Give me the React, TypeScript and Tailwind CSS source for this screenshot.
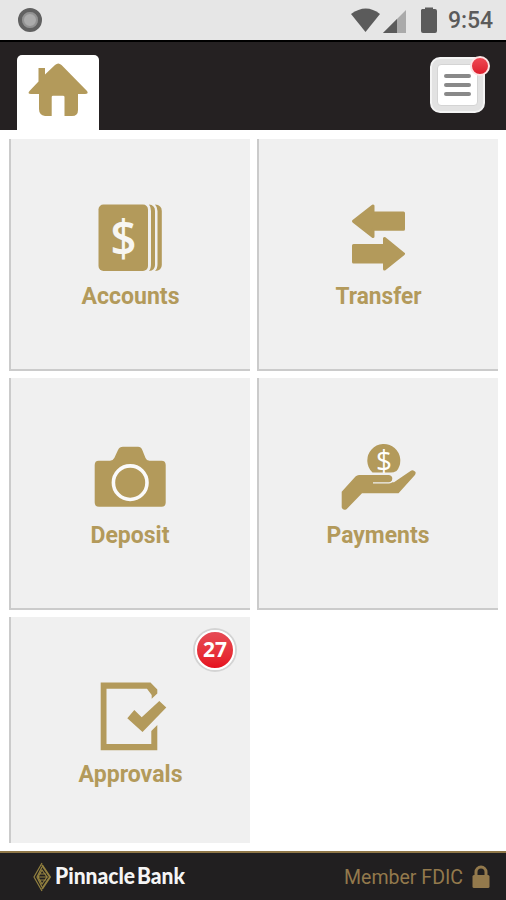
import React from 'react';

interface Tile {
  label: string;
  width: number;
  icon: React.ReactNode;
  badge?: number;
}

const AccountsIcon = () => (
  <svg width="81" height="80" viewBox="0 0 81 80" fill="#b39a5b">
    <rect x="9.5" y="5.5" width="49.5" height="66.5" rx="5" />
    <path d="M60 5.5Q66 6 66 12V66Q66 71.5 60 72Q62 70 62 65V12Q62 8 60 5.5Z" />
    <path d="M66 5.5Q72.8 6 72.8 12V66Q72.8 71.5 66 72Q68.5 70 68.5 65V12Q68.5 8 66 5.5Z" />
    <text x="34.5" y="57" textAnchor="middle" fontFamily="Open Sans, sans-serif" fontWeight="600" fontSize="50" textLength="26" lengthAdjust="spacingAndGlyphs" fill="#f7f6f2">$</text>
  </svg>
);

const TransferIcon = () => (
  <svg width="81" height="80" viewBox="0 0 81 80" fill="#b39a5b" stroke="#b39a5b" strokeWidth="3" strokeLinejoin="round">
    <path d="M16.5 22.2L36 7V14H66.5V30.2H36V37.5Z" />
    <path d="M66.5 54.8L47.5 39.5V46.5H16.5V63H47.5V70Z" />
  </svg>
);

const DepositIcon = () => (
  <svg width="81" height="80" viewBox="0 0 81 80" fill="#b39a5b">
    <path d="M9.7 22.7H21Q24 22.7 25.3 20L29 12Q30.5 8.7 34 8.7H49Q52 8.7 53.3 12L56.5 20Q57.5 22.7 60.5 22.7H72.5Q76.7 22.7 76.7 27V64.5Q76.7 68.7 72.5 68.7H10Q5.7 68.7 5.7 64.5V27Q5.7 22.7 9.7 22.7Z" />
    <circle cx="41.2" cy="44.7" r="16.8" fill="none" stroke="#fafafa" strokeWidth="3.6" />
  </svg>
);

const PaymentsIcon = () => (
  <svg width="81" height="80" viewBox="0 0 81 80" fill="#b39a5b">
    <path d="M35.5 34.5A16.5 16.5 0 1 1 59.5 33Q56.5 34.5 54 34.5Z" />
    <text x="47" y="32.5" textAnchor="middle" fontFamily="Open Sans, sans-serif" fontWeight="500" fontSize="30" textLength="16" lengthAdjust="spacingAndGlyphs" fill="#fff">$</text>
    <path d="M4.7 53.7L18.5 38.5Q20 37 22 37H52Q55.5 37.5 55.3 41Q55 44.2 52 44.2H57L73.5 33Q76 31.2 78.5 34Q79 36 77.5 37.5L61.5 55.3H25L9.5 71.2Q6 73 4.7 69.5Z" />
    <path d="M36 44.9H52Q56 44.5 56.8 40" fill="none" stroke="#f0f0f0" strokeWidth="1.3" />
  </svg>
);

const ApprovalsIcon = () => (
  <svg width="81" height="80" viewBox="0 0 81 80" fill="#b39a5b">
    <path d="M11.7 5.5H61.5L68.3 12.5V16.5L62.7 21.8V18L58 11.8H17.5V67H62.3V54L68.3 48V73.3H11.7Z" />
    <path d="M38.3 41.3L45.3 33L52.7 40.3L70.3 24L77.3 30.5L53.5 55Z" />
  </svg>
);

const tiles: Tile[] = [
  { label: 'Accounts', width: 98, icon: <AccountsIcon /> },
  { label: 'Transfer', width: 86, icon: <TransferIcon /> },
  { label: 'Deposit', width: 79, icon: <DepositIcon /> },
  { label: 'Payments', width: 103, icon: <PaymentsIcon /> },
  { label: 'Approvals', width: 104, icon: <ApprovalsIcon />, badge: 27 },
];

const StatusBar = () => (
  <div className="flex h-10 shrink-0 items-center justify-between bg-[#e6e6e6] pl-[18px] pr-3">
    <div className="h-6 w-6 rounded-full border-4 border-[#616161] bg-[#ababab] shadow-[inset_0_0_0_2px_#929292]" />
    <div className="flex items-center text-[#5b5b5b]">
      <svg width="93" height="28" viewBox="0 0 93 28" fill="currentColor">
        <path d="M0 8Q15 -3 29 8L14.5 26Z" />
        <path d="M32 27L55 4V27Z" fill="#aaa" />
        <path d="M32 27L46 13V27Z" />
        <path d="M71 3H74V1.5H82V3H84Q86 3 86 5V25Q86 27 84 27H72Q70 27 70 25V4Z" />
      </svg>
      <span className="ml-1 mt-0.5 w-[46px] whitespace-nowrap text-[23px] font-medium leading-7 tracking-[-0.1px]">9:54</span>
    </div>
  </div>
);

const Header = () => (
  <header className="flex h-[90px] shrink-0 items-start justify-between border-t-2 border-black bg-[#252122] pl-[17px] pr-[21px]">
    <div className="mt-[13px] h-[75px] w-[82px] rounded-t-[5px] bg-white">
      <svg width="82" height="75" viewBox="17 55 82 75" fill="#b39a5b">
        <path d="M38.5 68H45V74.5L55 65Q58.3 62 61.5 65L87 91Q89 94 85 94H78V110Q78 116 72 116H64.5V97Q64.5 95.7 63 95.7H53Q51.7 95.7 51.7 97V116H45Q39 115 39 109V94H31Q27 94 29.5 91L38.5 81.5Z" />
      </svg>
    </div>
    <button className="relative mt-[15px] h-14 w-[55px] rounded-[10px] border-2 border-[#f4f4f4] bg-[#e2e2e2] p-[5px]">
      <div className="flex h-[42px] w-[41px] flex-col items-center justify-center gap-[5px] rounded border border-[#d4d4d4] bg-white">
        <span className="h-[4px] w-[27px] rounded-full bg-[#898989]" />
        <span className="h-[4px] w-[27px] rounded-full bg-[#898989]" />
        <span className="h-[4px] w-[27px] rounded-full bg-[#898989]" />
      </div>
      <span className="absolute -right-[7px] -top-[3px] h-5 w-5 rounded-full border-2 border-[#fce4e4] bg-linear-to-b from-[#ef4752] to-[#dd1c2c]" />
    </button>
  </header>
);

const MenuTile = ({ label, width, icon, badge }: Tile) => (
  <div
    className={
      badge
        ? 'relative flex h-[226px] flex-col items-center bg-[#f0f0f0] pt-[60px] shadow-[inset_2px_0_0_#cbcbcb]'
        : 'relative flex h-[232px] flex-col items-center bg-[#f0f0f0] pt-[60px] shadow-[inset_2px_-2px_0_#cbcbcb]'
    }
  >
    {icon}
    <svg width={width} height="32" className="overflow-visible">
      <text x="0.5" y="24.5" textLength={width} lengthAdjust="spacingAndGlyphs" fontSize="23" fontWeight="700" fill="#b39a5b">
        {label}
      </text>
    </svg>
    {badge && (
      <span className="absolute right-[15px] top-[13px] flex h-10 w-10 items-center justify-center rounded-full border-2 border-white bg-linear-to-b from-[#e64a55] to-[#e60e1e] font-['Open_Sans',sans-serif] text-[21px] font-bold text-white shadow-[0_0_0_2px_#d4d4d4]">
        {badge}
      </span>
    )}
  </div>
);

const Footer = () => (
  <footer className="flex h-[49px] shrink-0 items-center justify-between border-t-2 border-[#8f7748] bg-[#211f20] pl-[33px] pr-4">
    <div className="flex items-center gap-1">
      <svg width="18" height="30" viewBox="0 0 18 30" fill="none" stroke="#93813f" strokeWidth="1.2">
        <path d="M9 1L1 15L9 29M9 5L4 15L9 25" />
        <path d="M9 3L17 15L9 27" strokeWidth="2" />
        <path d="M9 8L14 15L9 22L5 15ZM6 12H13M5 15H15M6 18H13" />
      </svg>
      <svg width="132" height="30" className="overflow-visible">
        <text y="22" fontFamily="Lato, sans-serif" fontSize="23" fontWeight="900" fill="#f5f5f5">
          <tspan x="0" textLength="80" lengthAdjust="spacingAndGlyphs">Pinnacle</tspan>
          <tspan x="82" textLength="48" lengthAdjust="spacingAndGlyphs">Bank</tspan>
        </text>
      </svg>
    </div>
    <div className="flex items-center text-[#93794c]">
      <svg width="120" height="30" className="overflow-visible">
        <text x="0" y="22" textLength="119" lengthAdjust="spacingAndGlyphs" fontSize="21" fill="currentColor">Member FDIC</text>
      </svg>
      <svg className="ml-2" width="18" height="24" viewBox="0 0 18 24">
        <path d="M4 11V7A5 5 0 0 1 14 7V11" fill="none" stroke="currentColor" strokeWidth="3" />
        <rect x="0.5" y="10" width="17" height="13" rx="1.5" fill="currentColor" />
      </svg>
    </div>
  </footer>
);

export default function App() {
  return (
    <div className="flex h-[900px] w-[506px] flex-col overflow-hidden bg-white font-['Roboto',sans-serif]">
      <StatusBar />
      <Header />
      <main className="grid flex-1 grid-cols-[241px_241px] content-start gap-x-[7px] gap-y-[7px] pl-[9px] pt-[9px]">
        {tiles.map((tile) => (
          <MenuTile key={tile.label} {...tile} />
        ))}
      </main>
      <Footer />
    </div>
  );
}
